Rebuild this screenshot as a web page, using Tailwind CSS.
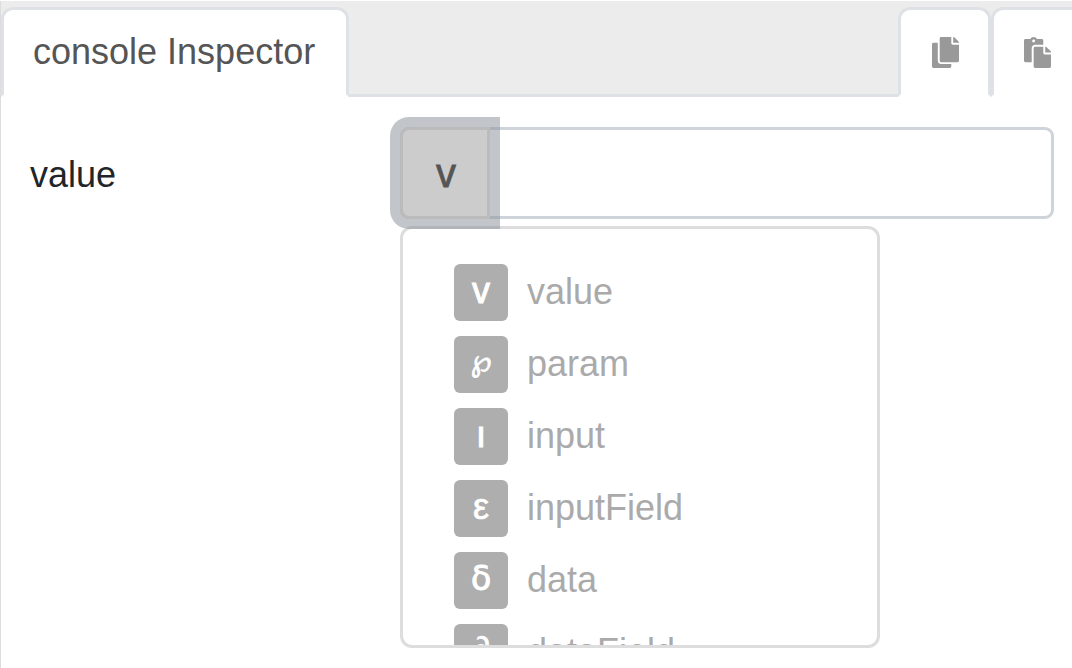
<!DOCTYPE html>
<html lang="en">
<head>
<meta charset="utf-8">
<title>console Inspector</title>
<script src="https://cdn.jsdelivr.net/npm/@tailwindcss/browser@4"></script>
</head>
<body class="w-[1072px] h-[668px] overflow-hidden bg-white font-['Liberation_Sans',Arial,sans-serif] text-[36px] leading-[54px] text-[#212529]">
<div class="h-full mt-px border-l border-[#dddddd]">
  <nav class="flex h-24 bg-[#ececec] pt-[6px] overflow-hidden">
    <div class="w-[348px] shrink-0 rounded-t-[12px] border-[3px] border-[#dee2e6] border-b-white bg-white pl-[29px] pt-[15px] text-[#555555] whitespace-nowrap">console Inspector</div>
    <div class="flex-1 border-b-[3px] border-[#dee2e6]"></div>
    <div class="w-[93px] shrink-0 rounded-t-[12px] border-[3px] border-[#dee2e6] border-b-white bg-white pl-[31px] pt-[27px]">
      <svg class="w-[27px] h-[31px]" viewBox="0 0 448 512" fill="#999999"><path d="M320 448v40c0 13.255-10.745 24-24 24H24c-13.255 0-24-10.745-24-24V120c0-13.255 10.745-24 24-24h72v296c0 30.879 25.121 56 56 56h168zm0-344V0H152c-13.255 0-24 10.745-24 24v368c0 13.255 10.745 24 24 24h272c13.255 0 24-10.745 24-24V128H344c-13.200 0-24-10.800-24-24zm120.971-31.029L375.029 7.029A24 24 0 0 0 358.059 0H352v96h96v-6.059a24 24 0 0 0-7.029-16.970z"/></svg>
    </div>
    <div class="w-[93px] -mr-[12px] shrink-0 rounded-t-[12px] border-[3px] border-[#dee2e6] border-b-white bg-white pl-[30px] pt-[27px]">
      <svg class="w-[27px] h-[31px]" viewBox="0 0 448 512" fill="#999999"><path d="M128 184c0-30.879 25.122-56 56-56h136V56c0-13.255-10.745-24-24-24h-80.610C204.306 12.890 183.637 0 160 0s-44.306 12.890-55.390 32H24C10.745 32 0 42.745 0 56v336c0 13.255 10.745 24 24 24h104V184zm32-144c13.255 0 24 10.745 24 24s-10.745 24-24 24-24-10.745-24-24 10.745-24 24-24zm184 248h104v200c0 13.255-10.745 24-24 24H184c-13.255 0-24-10.745-24-24V184c0-13.255 10.745-24 24-24h136v104c0 13.200 10.800 24 24 24zm104-38.059V256h-96v-96h6.059a24 24 0 0 1 16.970 7.029l65.941 65.941a24.002 24.002 0 0 1 7.030 16.971z"/></svg>
    </div>
  </nav>
  <main class="flex pl-[29px] pt-[30px]">
    <label class="w-[370px] shrink-0 pt-[21px]">value</label>
    <div class="w-[654px] relative">
      <div class="h-[92px] rounded-[9px] border-[3px] border-[#ced4da]"></div>
      <ul class="mt-[7px] w-[480px] h-[422px] overflow-hidden rounded-[12px] border-[3px] border-[#dddddd] pl-[51px] pt-[35px] text-[#aaaaaa] leading-[56px] bg-white">
        <li class="flex h-[72px]"><span class="w-[54px] h-[57px] mr-[19px] rounded-[6px] bg-[#aeaeae] text-white text-center font-['Liberation_Sans'] [-webkit-text-stroke:1px_white] leading-[54px]">v</span>value</li>
        <li class="flex h-[72px]"><span class="w-[54px] h-[57px] mr-[19px] rounded-[6px] bg-[#aeaeae] text-white text-center font-['DejaVu_Sans'] text-[30px] leading-[49px] [-webkit-text-stroke:0.7px_white]">℘</span>param</li>
        <li class="flex h-[72px]"><span class="w-[54px] h-[57px] mr-[19px] rounded-[6px] bg-[#aeaeae] text-white text-center font-['Liberation_Sans'] [-webkit-text-stroke:1px_white] leading-[54px]">ı</span>input</li>
        <li class="flex h-[72px]"><span class="w-[54px] h-[57px] mr-[19px] rounded-[6px] bg-[#aeaeae] text-white text-center font-['Liberation_Sans'] [-webkit-text-stroke:0.7px_white] leading-[54px]">ε</span>inputField</li>
        <li class="flex h-[72px]"><span class="w-[54px] h-[57px] mr-[19px] rounded-[6px] bg-[#aeaeae] text-white text-center font-['DejaVu_Sans'] text-[33px] [-webkit-text-stroke:1px_white] leading-[54px]">δ</span>data</li>
        <li class="flex h-[72px]"><span class="w-[54px] h-[57px] mr-[19px] rounded-[6px] bg-[#aeaeae] text-white text-center font-['Liberation_Sans'] [-webkit-text-stroke:0.5px_white] leading-[52px]">∂</span>dataField</li>
      </ul>
      <button class="absolute left-0 top-0 w-[90px] h-[92px] rounded-l-[9px] border-[3px] border-[#bbbbbb] bg-[#cccccc] pl-[2px] text-[#555555] font-['Liberation_Sans'] [-webkit-text-stroke:0.8px_#555555] text-[40px] leading-[54px] shadow-[0_0_0_10px_rgba(134,142,150,0.5)]">v</button>
    </div>
  </main>
</div>
</body>
</html>
